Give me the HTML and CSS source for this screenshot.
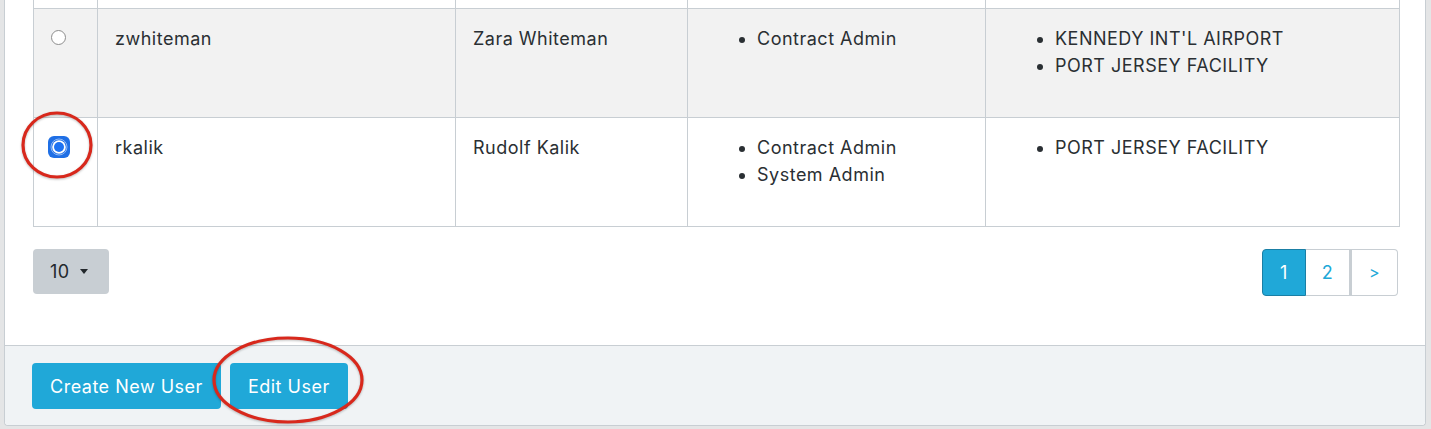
FILE: index.html
```html
<!DOCTYPE html>
<html lang="en">
<head>
<meta charset="utf-8">
<title>Users</title>
<link rel="stylesheet" href="styles.css">
</head>
<body>
<div class="page">
  <div class="card">
    <div class="card-body">
      <table class="users">
        <colgroup>
          <col class="c-sel"><col class="c-user"><col class="c-name"><col class="c-roles"><col class="c-loc">
        </colgroup>
        <tbody>
          <tr class="row-cut"><td></td><td></td><td></td><td></td><td></td></tr>
          <tr class="row-alt">
            <td><span class="radio"></span></td>
            <td>zwhiteman</td>
            <td>Zara Whiteman</td>
            <td><ul><li>Contract Admin</li></ul></td>
            <td><ul><li>KENNEDY INT'L AIRPORT</li><li>PORT JERSEY FACILITY</li></ul></td>
          </tr>
          <tr>
            <td>
              <span class="radio-checked">
                <svg width="22" height="22" viewBox="0 0 22 22">
                  <rect x="0" y="0" width="22" height="22" rx="6" fill="#1f6fe5"/>
                  <circle cx="11" cy="11" r="8" fill="none" stroke="#8fb8f6" stroke-width="1"/>
                  <circle cx="11" cy="11" r="6.8" fill="#ffffff"/>
                  <circle cx="11" cy="11" r="5" fill="#1d72f2"/>
                </svg>
              </span>
            </td>
            <td>rkalik</td>
            <td>Rudolf Kalik</td>
            <td><ul><li>Contract Admin</li><li>System Admin</li></ul></td>
            <td><ul><li>PORT JERSEY FACILITY</li></ul></td>
          </tr>
        </tbody>
      </table>
      <div class="table-controls">
        <button class="page-size" type="button">10 <span class="caret"></span></button>
        <ul class="pagination">
          <li class="page-item active">1</li>
          <li class="page-item">2</li>
          <li class="page-item next">&gt;</li>
        </ul>
      </div>
    </div>
    <div class="card-footer">
      <button class="btn" type="button">Create New User</button>
      <button class="btn" type="button">Edit User</button>
    </div>
  </div>
</div>
<svg class="mark mark-radio" width="76" height="72" viewBox="0 0 76 72">
  <ellipse cx="38" cy="36" rx="34" ry="32" fill="none" stroke="#d8281c" stroke-width="3.2"/>
</svg>
<svg class="mark mark-edit" width="156" height="92" viewBox="0 0 156 92">
  <ellipse cx="78" cy="46" rx="74" ry="42" fill="none" stroke="#d8281c" stroke-width="3.2"/>
</svg>
</body>
</html>
```
FILE: styles.css
```css
html, body {
  margin: 0;
  padding: 0;
}
body {
  background: #e4e5e6;
  font-family: Inter, "Liberation Sans", sans-serif;
  font-size: 18px;
  letter-spacing: 0.5px;
  line-height: 27px;
  color: #2a2f33;
  width: 1431px;
  height: 429px;
  overflow: hidden;
  position: relative;
}
.page {
  padding: 0 5px 3px 4px;
}
.card {
  background: #ffffff;
  border: 1px solid #c8ced3;
  border-top: none;
  border-radius: 0 0 4px 4px;
}
.card-body {
  padding: 0 26px 49px 28px;
}
.users {
  width: 1366px;
  border-collapse: collapse;
  table-layout: fixed;
}
.c-sel { width: 64px; }
.c-user { width: 358px; }
.c-name { width: 232px; }
.c-roles { width: 298px; }
.c-loc { width: 414px; }
.users td {
  border: 1px solid #c8ced3;
  padding: 16px 17px 16px 17px;
  vertical-align: top;
}
.users .row-cut td {
  padding: 0;
  height: 8px;
  border-top: none;
}
.row-alt {
  background: #f2f2f2;
}
.users ul {
  margin: 0 0 22px;
  padding-left: 52px;
}
.radio {
  display: block;
  width: 13px;
  height: 13px;
  margin: 5px 0 0 0;
  border: 1px solid #8d8d8d;
  border-radius: 50%;
  background: #ffffff;
}
.radio-checked {
  display: block;
  width: 22px;
  height: 22px;
  margin: 2px 0 0 -3px;
}
.radio-checked svg {
  display: block;
}
.table-controls {
  display: flex;
  justify-content: space-between;
  align-items: flex-start;
  margin-top: 22px;
}
.page-size {
  width: 76px;
  height: 45px;
  border: none;
  border-radius: 4px;
  background: #c8ced3;
  color: #23282c;
  font: inherit;
  letter-spacing: inherit;
  padding: 0 0 0 17px;
  text-align: left;
  display: flex;
  align-items: center;
}
.caret {
  display: inline-block;
  width: 0;
  height: 0;
  margin-left: 10px;
  border-left: 4.5px solid transparent;
  border-right: 4.5px solid transparent;
  border-top: 5px solid #23282c;
}
.pagination {
  display: flex;
  list-style: none;
  margin: 0 1px 0 0;
  padding: 0;
}
.page-item {
  width: 44px;
  height: 47px;
  box-sizing: border-box;
  border: 1px solid #c8ced3;
  border-left: none;
  color: #20a8d8;
  display: flex;
  align-items: center;
  justify-content: center;
}
.page-item.active {
  background: #20a8d8;
  color: #ffffff;
  border: 1px solid #1a7fa5;
  border-radius: 4px 0 0 4px;
}
.page-item.next {
  width: 48px;
  border-left: 2px solid #c8ced3;
  border-radius: 0 4px 4px 0;
  font-size: 16px;
}
.card-footer {
  border-top: 1px solid #c8ced3;
  background: #f0f3f5;
  padding: 17px 27px 16px;
  display: flex;
  gap: 9px;
  border-radius: 0 0 4px 4px;
}
.btn {
  height: 46px;
  border: none;
  border-radius: 4px;
  background: #20a8d8;
  color: #ffffff;
  font: inherit;
  letter-spacing: inherit;
  padding: 0 18px;
}
.mark {
  position: absolute;
  filter: drop-shadow(0 1px 1px rgba(0,0,0,0.25));
}
.mark-radio {
  left: 19px;
  top: 109px;
}
.mark-edit {
  left: 210px;
  top: 334px;
}
```
